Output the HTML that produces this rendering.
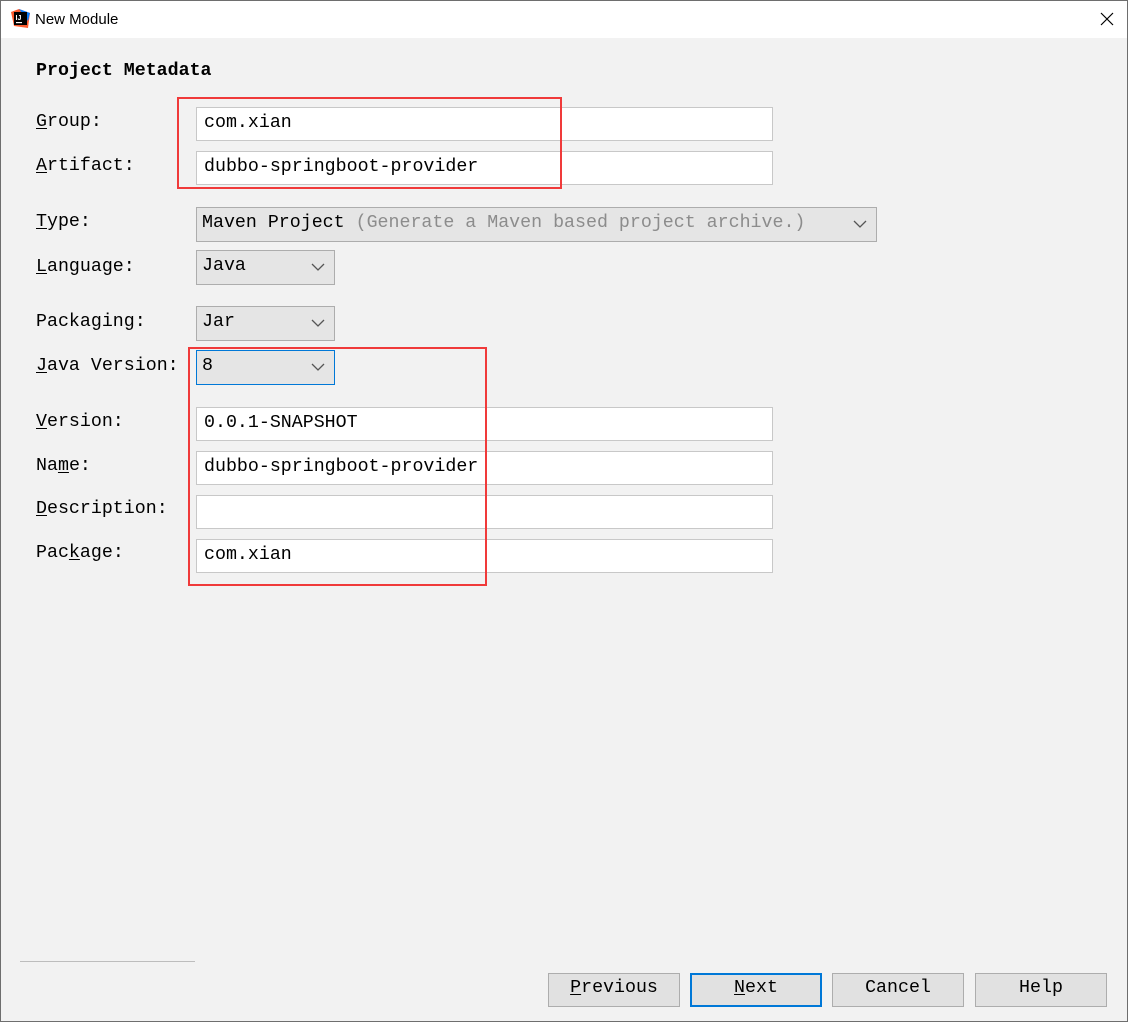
<!DOCTYPE html>
<html><head><style>
*{margin:0;padding:0;box-sizing:border-box}
body{width:1128px;height:1022px;background:#f2f2f2;position:relative;overflow:hidden;font-family:"Liberation Mono",monospace;font-size:18.3px;color:#000}
.win{position:absolute;left:0;top:0;width:1128px;height:1022px;border:1px solid #6e6e6e}
.title{position:absolute;left:1px;top:1px;width:1126px;height:37px;background:#fff;font-family:"Liberation Sans",sans-serif;font-size:15px}
.a{position:absolute;white-space:pre}
.lbl{position:absolute;left:36px;height:24px;line-height:24px}
.f{position:absolute;background:#fff;border:1px solid #c8c8c8;height:34px;line-height:30px;padding-left:7px;white-space:pre}
.c{position:absolute;background:#e5e5e5;border:1px solid #adadad;height:35px;line-height:31px;padding-left:5px;white-space:pre}
.c svg{position:absolute;right:9px;top:12px}
.red{position:absolute;border:2px solid #f03a3a}
.b{position:absolute;top:973px;width:132px;height:34px;background:#e1e1e1;border:1px solid #adadad;text-align:center;line-height:28px}
u{text-decoration:underline;text-underline-offset:2px}
</style></head><body>
<div class="win"></div>
<div class="title">
<svg style="position:absolute;left:10px;top:8px" width="19" height="19" viewBox="0 0 19 19"><polygon points="0,3 8,0 19,4 17,19 3,17" fill="#fc5b2e"/><polygon points="8,0 19,4 17,12" fill="#087cfa"/><rect x="3" y="3" width="13" height="13" fill="#000"/><text x="4.5" y="11" font-family="Liberation Sans" font-weight="bold" font-size="7" fill="#fff">IJ</text><rect x="5" y="13" width="6" height="1.2" fill="#fff"/></svg>
<div class="a" style="left:34px;top:10px">New Module</div>
<svg style="position:absolute;left:1099px;top:11px" width="14" height="14"><path d="M1 1L13 13M13 1L1 13" stroke="#000" stroke-width="1.2"/></svg>
</div>
<div class="a" style="left:36px;top:61px;font-weight:bold">Project Metadata</div>

<div class="lbl" style="top:110px"><u>G</u>roup:</div>
<div class="f" style="left:196px;top:107px;width:577px">com.xian</div>
<div class="lbl" style="top:154px"><u>A</u>rtifact:</div>
<div class="f" style="left:196px;top:151px;width:577px">dubbo-springboot-provider</div>

<div class="lbl" style="top:210px"><u>T</u>ype:</div>
<div class="c" style="left:196px;top:207px;width:681px">Maven Project <span style="color:#8c8c8c">(Generate a Maven based project archive.)</span><svg width="14" height="9"><path d="M1 1L7 7L13 1" stroke="#555" stroke-width="1.3" fill="none"/></svg></div>
<div class="lbl" style="top:255px"><u>L</u>anguage:</div>
<div class="c" style="left:196px;top:250px;width:139px">Java<svg width="14" height="9"><path d="M1 1L7 7L13 1" stroke="#555" stroke-width="1.3" fill="none"/></svg></div>
<div class="lbl" style="top:310px">Packaging:</div>
<div class="c" style="left:196px;top:306px;width:139px">Jar<svg width="14" height="9"><path d="M1 1L7 7L13 1" stroke="#555" stroke-width="1.3" fill="none"/></svg></div>
<div class="lbl" style="top:354px"><u>J</u>ava Version:</div>
<div class="c" style="left:196px;top:350px;width:139px;border-color:#0078d7">8<svg width="14" height="9"><path d="M1 1L7 7L13 1" stroke="#555" stroke-width="1.3" fill="none"/></svg></div>

<div class="lbl" style="top:410px"><u>V</u>ersion:</div>
<div class="f" style="left:196px;top:407px;width:577px">0.0.1-SNAPSHOT</div>
<div class="lbl" style="top:454px">Na<u>m</u>e:</div>
<div class="f" style="left:196px;top:451px;width:577px">dubbo-springboot-provider</div>
<div class="lbl" style="top:497px"><u>D</u>escription:</div>
<div class="f" style="left:196px;top:495px;width:577px"></div>
<div class="lbl" style="top:541px">Pac<u>k</u>age:</div>
<div class="f" style="left:196px;top:539px;width:577px">com.xian</div>

<div class="red" style="left:177px;top:97px;width:385px;height:92px"></div>
<div class="red" style="left:188px;top:347px;width:299px;height:239px"></div>

<div style="position:absolute;left:20px;top:961px;width:175px;height:1px;background:#bdbdbd"></div>
<div class="b" style="left:548px"><u>P</u>revious</div>
<div class="b" style="left:690px;border:2px solid #0078d7;line-height:27px"><u>N</u>ext</div>
<div class="b" style="left:832px">Cancel</div>
<div class="b" style="left:975px">Help</div>
</body></html>
